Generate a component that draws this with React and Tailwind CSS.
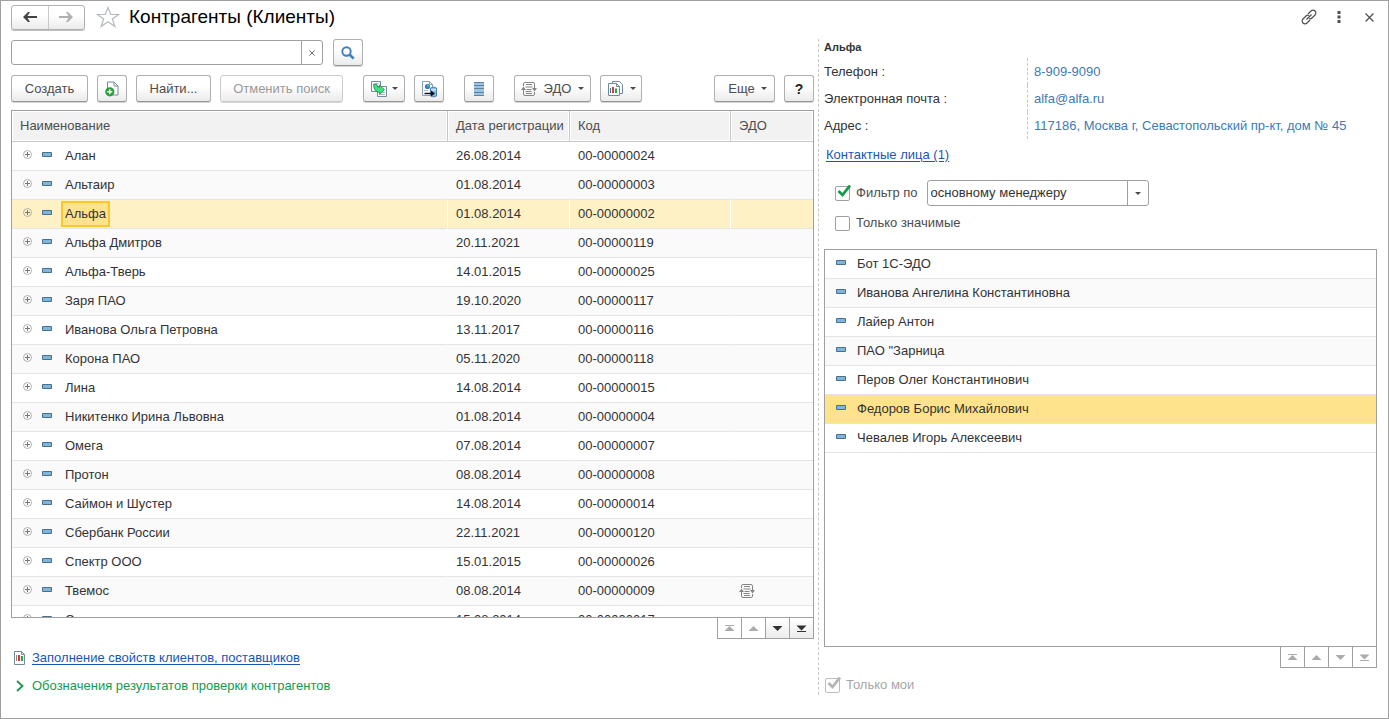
import React, { useState } from 'react';
import clsx from 'clsx';

const clients = [
  { name: 'Алан', date: '26.08.2014', code: '00-00000024' },
  { name: 'Альтаир', date: '01.08.2014', code: '00-00000003' },
  { name: 'Альфа', date: '01.08.2014', code: '00-00000002' },
  { name: 'Альфа Дмитров', date: '20.11.2021', code: '00-00000119' },
  { name: 'Альфа-Тверь', date: '14.01.2015', code: '00-00000025' },
  { name: 'Заря ПАО', date: '19.10.2020', code: '00-00000117' },
  { name: 'Иванова Ольга Петровна', date: '13.11.2017', code: '00-00000116' },
  { name: 'Корона ПАО', date: '05.11.2020', code: '00-00000118' },
  { name: 'Лина', date: '14.08.2014', code: '00-00000015' },
  { name: 'Никитенко Ирина Львовна', date: '01.08.2014', code: '00-00000004' },
  { name: 'Омега', date: '07.08.2014', code: '00-00000007' },
  { name: 'Протон', date: '08.08.2014', code: '00-00000008' },
  { name: 'Саймон и Шустер', date: '14.08.2014', code: '00-00000014' },
  { name: 'Сбербанк России', date: '22.11.2021', code: '00-00000120' },
  { name: 'Спектр ООО', date: '15.01.2015', code: '00-00000026' },
  { name: 'Твемос', date: '08.08.2014', code: '00-00000009', edo: true },
  { name: 'Союз', date: '15.08.2014', code: '00-00000017' },
];

const managers = [
  'Бот 1С-ЭДО',
  'Иванова Ангелина Константиновна',
  'Лайер Антон',
  'ПАО "Зарница',
  'Перов Олег Константинович',
  'Федоров Борис Михайлович',
  'Чевалев Игорь Алексеевич',
];

const contacts = [
  { label: 'Телефон :', value: '8-909-9090' },
  { label: 'Электронная почта :', value: 'alfa@alfa.ru' },
  { label: 'Адрес :', value: '117186, Москва г, Севастопольский пр-кт, дом № 45' },
];

/* Icons */

function ArrowLeft() {
  return (
    <svg width="14" height="10" viewBox="0 0 14 10" fill="currentColor">
      <path d="M0 5L5 0h2L4.500 4H14v2H4.500L7 10H5z" />
    </svg>
  );
}

function ArrowRight() {
  return (
    <svg width="14" height="10" viewBox="0 0 14 10" fill="currentColor">
      <path d="M14 5L9 0H7l2.500 4H0v2h9.500L7 10h2z" />
    </svg>
  );
}

function Star() {
  return (
    <svg width="24" height="22" viewBox="0 0 24 22" fill="none" stroke="#b4bac2" strokeWidth="1.200">
      <path d="M12 1.500l2.700 7h8L16.300 13l2.600 7.500-6.900-4.800-6.900 4.800L7.700 13 1.300 8.500h8z" />
    </svg>
  );
}

function LinkIcon() {
  return (
    <svg width="16" height="16" viewBox="0 0 16 16" fill="none" stroke="#505050" strokeWidth="1.200">
      <path d="M7 5l3-3a2.800 2.800 0 014 0 2.800 2.800 0 010 4l-3 3c-.8.8-2 1-3 .5" />
      <path d="M9 11l-3 3a2.800 2.800 0 01-4 0 2.800 2.800 0 010-4l3-3c.8-.8 2-1 3-.5" />
      <path d="M5.500 10.500l5-5" />
    </svg>
  );
}

function Cross({ size = 9 }) {
  return (
    <svg width={size} height={size} viewBox="0 0 8 8" stroke="#505050" strokeWidth="1.100">
      <path d="M.5.5l7 7M7.500.5l-7 7" />
    </svg>
  );
}

function Caret() {
  return (
    <svg width="6" height="3" viewBox="0 0 6 3" fill="#4a4a4a" className="shrink-0">
      <path d="M0 0h6L3 3z" />
    </svg>
  );
}

function Magnifier() {
  return (
    <svg width="14" height="14" viewBox="0 0 14 14" fill="none" stroke="#3c7fb8">
      <circle cx="5.500" cy="5.500" r="4.200" strokeWidth="1.900" />
      <path d="M8.500 8.500l4.200 4.200" strokeWidth="2.600" />
    </svg>
  );
}

function NewGroup() {
  return (
    <svg width="14" height="16" viewBox="0 0 14 16" fill="none">
      <path d="M2.500 1h6.500l4 4V14H2.500z" fill="#fff" stroke="#73899c" />
      <path d="M9 1v4h4" stroke="#73899c" />
      <circle cx="4.800" cy="10.800" r="4.600" fill="#2a9d3c" />
      <path d="M4.800 8.300v5M2.300 10.800h5" stroke="#fff" strokeWidth="1.400" />
    </svg>
  );
}

function CreateFrom() {
  return (
    <svg width="18" height="18" viewBox="0 0 18 18" fill="none" stroke="#73899c">
      <path d="M1.500 1.500h9v10h-9z" fill="#fff" />
      <path d="M3.500 3.500h5" stroke="#b0bdc9" />
      <path d="M7.500 6.500h9v10h-9z" fill="#fff" />
      <path d="M11 12.500h4M10 14.500h5" stroke="#9fb0bf" />
      <path d="M3.500 4.500H7Q7 8 9.500 7.500V5.200l5 4.500-5 4.800v-2.300Q4 12.500 3.500 4.500z" fill="#3fe07e" stroke="#168a44" strokeWidth=".8" />
    </svg>
  );
}

function SendDoc() {
  return (
    <svg width="18" height="18" viewBox="0 0 18 18" fill="none">
      <path d="M2.500 1.500h7l3 3v11h-10z" fill="#fff" stroke="#8ba0b3" />
      <path d="M9.500 1.500v3h3" stroke="#8ba0b3" />
      <circle cx="7.500" cy="6.500" r="2.600" fill="#2f7fc8" />
      <path d="M7 4.500l2 1-1 2-1-1z" fill="#5cc152" />
      <path d="M4 10.500h4" stroke="#a9c0d4" />
      <path d="M10.500 8q3-1.800 6 0v8q-3 1.800-6 0z" fill="#8cbbe6" stroke="#4a82b5" />
      <path d="M11 9.500q2.500 1 5 0" stroke="#fff" />
      <path d="M4.500 13.500h8" stroke="#111" strokeWidth="1.500" />
      <path d="M11 10.500l4 3-4 3z" fill="#111" />
    </svg>
  );
}

function ListIcon() {
  return (
    <svg width="10" height="14" viewBox="0 0 10 14">
      <path d="M0 0h10v14H0z" fill="#a3c2dc" />
      <path d="M0 .5h10M0 3.500h10M0 6.500h10M0 10.500h10M0 13.500h10" stroke="#5a83a8" />
    </svg>
  );
}

function EdoIcon({ className }) {
  return (
    <svg width="16" height="14" viewBox="0 0 16 14" fill="none" stroke="#858585" className={className}>
      <path d="M2.500 4V2Q2.500.5 4 .5h8Q13.500.5 13.500 2v4M13.500 10v2q0 1.500-1.500 1.500H4Q2.500 13.500 2.500 12V8" />
      <path d="M5 2.500h6M4.500 5h7M5.500 7.500h5M4.500 9.500h6M5 11.500h6" />
      <path d="M0 8h5L2.500 4.500zM11 6h5l-2.500 3.500z" fill="#858585" stroke="none" />
    </svg>
  );
}

function Reports() {
  return (
    <svg width="17" height="17" viewBox="0 0 17 17" fill="none" stroke="#73899c">
      <path d="M5.500 3V1.500h7l3 3v9H13" fill="#fff" />
      <path d="M1.500 3.500h8l3 3v9h-11z" fill="#fff" />
      <path d="M9.500 3.500v3h3" />
      <path d="M3.500 8v5" stroke="#3572b0" />
      <path d="M6 7v6" stroke="#e03a2f" strokeWidth="2" />
      <path d="M9 8.500V13" stroke="#2fa043" strokeWidth="2" />
    </svg>
  );
}

function ReportSmall() {
  return (
    <svg width="13" height="14" viewBox="0 0 13 14" fill="none" stroke="#73899c">
      <path d="M1.500.5h7l3 3v10h-10z" fill="#fff" />
      <path d="M8.500.5v3h3" />
      <path d="M3.500 4v6" stroke="#888" />
      <path d="M6 4v6" stroke="#e0332a" strokeWidth="2" />
      <path d="M9 5v5" stroke="#2fa043" strokeWidth="2" />
    </svg>
  );
}

function Plus() {
  return (
    <svg width="9" height="9" viewBox="0 0 9 9" fill="none">
      <circle cx="4.500" cy="4.500" r="4" stroke="#b0b0b0" />
      <path d="M2 4.500h5M4.500 2v5" stroke="#777" />
    </svg>
  );
}

function Dash() {
  return (
    <svg width="10" height="5" viewBox="0 0 10 5" className="shrink-0">
      <path d="M.5.5h9v4h-9z" fill="#7fb4dc" stroke="#4a6f8c" />
    </svg>
  );
}

function Chevron() {
  return (
    <svg width="8" height="12" viewBox="0 0 8 12" fill="none" stroke="#1a9850" strokeWidth="1.800">
      <path d="M1 1l5.500 5L1 11" />
    </svg>
  );
}

/* Controls */

const buttonStyle =
  'flex h-[27px] shrink-0 items-center justify-center rounded-[3px] border border-[#b0b0b0] border-b-[#969696] bg-linear-to-b from-white from-40% to-[#ebebeb] shadow-[0_1px_0_#d4d4d4] disabled:border-[#cbcbcb] disabled:text-[#999]';

function Button({ className, children, ...rest }) {
  return (
    <button type="button" className={clsx(buttonStyle, className)} {...rest}>
      {children}
    </button>
  );
}

function CheckBox({ label, muted, ...rest }) {
  return (
    <label className={clsx('flex items-center gap-[6px]', muted ? 'text-[#a6a6a6]' : 'text-[#4d4d4d]')}>
      <span className="relative flex">
        <input
          type="checkbox"
          className="peer size-[15px] appearance-none rounded-[2px] border border-[#a0a0a0] bg-white disabled:border-[#bdbdbd]"
          {...rest}
        />
        <svg
          width="14"
          height="13"
          viewBox="0 0 14 13"
          fill="none"
          strokeWidth="2.800"
          className={clsx('pointer-events-none absolute -top-px left-[2px] hidden peer-checked:block', muted ? 'stroke-[#b5b5b5]' : 'stroke-[#0f9d4b]')}
        >
          <path d="M1.500 6l4 4L13 .5" />
        </svg>
      </span>
      {label}
    </label>
  );
}

const pagerIcons = [
  { title: 'В начало', path: 'M0 0h9v1H0zM4.500 1L9.500 6h-10z' },
  { title: 'Назад', path: 'M4.500 1L9.500 6h-10z' },
  { title: 'Вперед', path: 'M-.5 1h10L4.500 6z' },
  { title: 'В конец', path: 'M-.5.5h10l-5 5zM0 6h9v1H0z' },
];

function Pager({ canGoDown }) {
  return (
    <div className="-mt-px flex self-end border border-[#a0a0a0] divide-x divide-[#a0a0a0]">
      {pagerIcons.map(({ title, path }, i) => {
        const active = canGoDown && i > 1;
        return (
          <button
            key={title}
            type="button"
            aria-label={title}
            disabled={!active}
            className={clsx(
              'flex h-5 items-center justify-center',
              i < 3 ? 'w-6' : 'w-[23px]',
              active ? 'bg-linear-to-b from-white to-[#ececec]' : 'bg-white',
            )}
          >
            <svg width="9" height="7" viewBox="0 0 9 7" fill={active ? '#333' : '#ababab'} className="overflow-visible">
              <path d={path} />
            </svg>
          </button>
        );
      })}
    </div>
  );
}

function ClientTable() {
  const [selected, setSelected] = useState(2);
  const th = 'h-[31px] border-b border-r border-[#c8c8c8] px-2 text-left font-normal shadow-[inset_0_0_0_1px_#fff]';
  return (
    <div className="min-h-0 flex-1 overflow-hidden border border-[#a0a0a0]">
      <table className="w-full table-fixed border-separate border-spacing-0">
        <thead className="bg-[#f2f2f2] text-[#4d4d4d]">
          <tr>
            <th className={th}>Наименование</th>
            <th className={clsx(th, 'w-[122px] whitespace-nowrap')}>Дата регистрации</th>
            <th className={clsx(th, 'w-[161px]')}>Код</th>
            <th className={clsx(th, 'w-[82px] border-r-0')}>ЭДО</th>
          </tr>
        </thead>
        <tbody>
          {clients.map((c, i) => {
            const active = i === selected;
            const td = clsx(
              'h-[29px] border-b border-b-[#e4e4e4] border-r px-2',
              active ? 'border-r-white bg-[#fdf1c5] bg-clip-padding' : 'border-r-transparent',
              !active && i % 2 === 1 && 'bg-[#fafafa]',
            );
            return (
              <tr key={c.code} onClick={() => setSelected(i)}>
                <td className={td}>
                  <div className="flex items-center pl-[3px]">
                    <span className="flex items-center gap-[10px] pb-[3px]">
                      <Plus />
                      <Dash />
                    </span>
                    <span
                      className={clsx(
                        'ml-[9px] border-2 px-[2px] leading-[22px]',
                        active ? 'border-[#fac72c] bg-[#fee38c]' : 'border-transparent',
                      )}
                    >
                      {c.name}
                    </span>
                  </div>
                </td>
                <td className={td}>{c.date}</td>
                <td className={td}>{c.code}</td>
                <td className={clsx(td, 'border-r-0')}>{c.edo && <EdoIcon />}</td>
              </tr>
            );
          })}
        </tbody>
      </table>
    </div>
  );
}

function ClientsPanel() {
  return (
    <section className="flex min-h-0 min-w-0 flex-col pl-[10px] pr-1">
      <div className="flex items-center gap-[10px]">
        <div className="flex h-[25px] w-[312px] rounded-[3px] border border-[#a0a0a0] bg-white">
          <input type="text" aria-label="Поиск" className="min-w-0 flex-1 px-1 outline-none" />
          <button type="button" aria-label="Очистить" className="flex w-[21px] items-center justify-center border-l border-[#a0a0a0]">
            <Cross size={6} />
          </button>
        </div>
        <Button className="w-[30px]" aria-label="Искать"><Magnifier /></Button>
      </div>

      <div className="mt-[9px] flex gap-[9px] text-[#4d4d4d]">
        <Button className="w-[77px]">Создать</Button>
        <Button className="w-[30px]" aria-label="Создать группу"><NewGroup /></Button>
        <Button className="w-[75px]">Найти...</Button>
        <Button className="w-[123px]" disabled>Отменить поиск</Button>
        <div className="ml-[11px] flex gap-[9px]">
          <Button className="w-[42px] gap-1" aria-label="Создать на основании"><CreateFrom /><Caret /></Button>
          <Button className="w-[30px]" aria-label="Отправить"><SendDoc /></Button>
        </div>
        <Button className="mx-[11px] w-[30px]" aria-label="Список"><ListIcon /></Button>
        <Button className="w-[77px] gap-[7px]"><EdoIcon className="shrink-0" />ЭДО<Caret /></Button>
        <Button className="w-[42px] gap-[6px]" aria-label="Отчеты"><Reports /><Caret /></Button>
        <Button className="ml-auto w-[61px] gap-[6px] pl-[6px]">Еще<Caret /></Button>
        <Button className="w-[30px] text-[14px] font-bold text-[#222]">?</Button>
      </div>

      <div className="mt-2 flex min-h-0 flex-1 flex-col">
        <ClientTable />
        <Pager canGoDown />
      </div>

      <div className="mt-[9px] flex h-5 items-center gap-[6px] pl-[2px]">
        <ReportSmall />
        <a href="#report" className="text-[#1c55ae] underline underline-offset-2">Заполнение свойств клиентов, поставщиков</a>
      </div>
      <button type="button" className="mt-2 flex h-5 items-center gap-2 pl-[5px] text-[#1a9850]">
        <Chevron />
        Обозначения результатов проверки контрагентов
      </button>
    </section>
  );
}

function DetailsPanel() {
  return (
    <section className="mb-px flex min-h-0 min-w-0 flex-col border-l border-dashed border-[#c8c8c8] pl-[5px] pr-[11px]">
      <h2 className="text-[11px] leading-4 font-bold">Альфа</h2>
      <dl className="mt-[3px] grid grid-cols-[203px_1fr] leading-[27px]">
        {contacts.map((c) => (
          <React.Fragment key={c.label}>
            <dt>{c.label}</dt>
            <dd className="border-l border-dashed border-[#c8c8c8] pl-[6px] whitespace-nowrap text-[#3f7ab5]">{c.value}</dd>
          </React.Fragment>
        ))}
      </dl>
      <a href="#contacts" className="mt-[6px] self-start pl-[2px] text-[#1c55ae] underline underline-offset-2">Контактные лица (1)</a>

      <div className="mt-[15px] flex items-center gap-[9px] pl-[11px]">
        <CheckBox label="Фильтр по" defaultChecked />
        <div className="relative flex w-[222px]">
          <select aria-label="Фильтр по" className="h-[26px] w-full appearance-none rounded-[3px] border border-[#a0a0a0] bg-white px-[3px]">
            <option>основному менеджеру</option>
          </select>
          <span className="pointer-events-none absolute inset-y-0 right-0 flex w-[22px] items-center justify-center border-l border-[#a0a0a0]">
            <Caret />
          </span>
        </div>
      </div>
      <div className="mt-[7px] pl-[11px]">
        <CheckBox label="Только значимые" />
      </div>

      <div className="mt-4 flex min-h-0 flex-1 flex-col">
        <ul className="min-h-0 flex-1 overflow-hidden border border-[#a0a0a0]">
          {managers.map((name, i) => (
            <li
              key={name}
              className={clsx(
                'flex h-[29px] items-center gap-[11px] border-b border-[#e4e4e4] pl-[11px]',
                i === 5 ? 'bg-[#fee38c]' : i % 2 === 1 && 'bg-[#fafafa]',
              )}
            >
              <span className="pb-[3px]"><Dash /></span>
              {name}
            </li>
          ))}
        </ul>
        <Pager />
      </div>
      <div className="mt-[7px] pl-px">
        <CheckBox label="Только мои" muted disabled defaultChecked />
      </div>
    </section>
  );
}

export default function App() {
  return (
    <div className="flex h-screen flex-col border border-[#a0a0a0] bg-white font-['Liberation_Sans',Arial,sans-serif] text-[13px] leading-5 text-[#333]">
      <header className="flex h-8 shrink-0 items-center pl-[10px] pr-[14px]">
        <div className="flex h-[25px] w-[74px] divide-x divide-[#c8c8c8] rounded-[3px] border border-[#b0b0b0] bg-linear-to-b from-white from-40% to-[#ebebeb] shadow-[0_1px_0_#c0c0c0]">
          <button type="button" aria-label="Назад" className="flex flex-1 items-center justify-center text-[#444]"><ArrowLeft /></button>
          <button type="button" aria-label="Вперед" className="flex flex-1 items-center justify-center text-[#b0b0b0]"><ArrowRight /></button>
        </div>
        <button type="button" aria-label="В избранное" className="ml-[11px]"><Star /></button>
        <h1 className="ml-[9px] text-[19px] text-black">Контрагенты (Клиенты)</h1>
        <div className="ml-auto flex items-center">
          <button type="button" aria-label="Получить ссылку"><LinkIcon /></button>
          <button type="button" aria-label="Меню" className="ml-5">
            <svg width="4" height="12" viewBox="0 0 4 12" fill="#505050">
              <path d="M.5 0h3v3h-3zM.5 4.500h3v3h-3zM.5 9h3v3h-3z" />
            </svg>
          </button>
          <button type="button" aria-label="Закрыть" className="ml-6"><Cross /></button>
        </div>
      </header>
      <main className="grid min-h-0 flex-1 grid-cols-[817fr_570fr] grid-rows-[minmax(0,1fr)] pt-[6px] pb-[22px]">
        <ClientsPanel />
        <DetailsPanel />
      </main>
    </div>
  );
}
